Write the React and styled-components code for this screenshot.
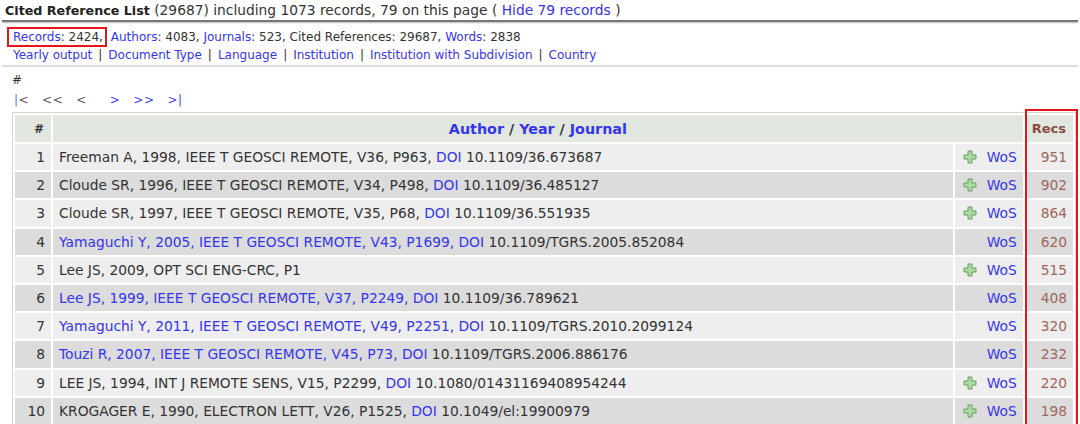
import React from 'react';
import styled, {createGlobalStyle} from 'styled-components';

const GlobalStyle = createGlobalStyle`
  body {
    margin: 0;
    background: #fff;
    font-family: "DejaVu Sans", Verdana, sans-serif;
    font-size: 13.8px;
    color: #333;
  }
`

const Page = styled.div`
  padding: 2px 2px 0 2px;
`
const TitleBar = styled.div`
  padding: 0 3px 1px 3px;
  line-height: 17px;
  border-bottom: 2px solid #777;
  box-shadow: 0 1px 0 #ccc;
`
const Title = styled.b`
  color: #222;
  font-size: 12.7px;
`
const Link = styled.a`
  color: ${p => p.$brown ? '#a0665c' : '#3535ee'};
  text-decoration: none;
  font-weight: ${p => p.$bold ? 'bold' : 'normal'};
`
const InfoBox = styled.div`
  margin-top: 1px;
  padding: 4px 10px 1px 11px;
  border-top: 1px solid #eee;
  border-bottom: 2px solid #ddd;
  line-height: 18px;
  font-size: 12px;
`
const Marked = styled.span`
  display: inline-block;
  border: 2px solid #e8141c;
  padding: 0 2px 0 4px;
  margin: -1px 0 -1px -6px;
  line-height: 16px;
`
const Sep = styled.span`
  margin: 0 6px;
`
const Hash = styled.div`
  margin: 5px 0 0 10px;
  line-height: 16px;
  font-size: 12px;
`
const Pager = styled.div`
  display: flex;
  gap: 13px;
  margin: 4px 0 0 12px;
  line-height: 16px;
  font-size: 12px;
  letter-spacing: 0.5px;
  padding-bottom: 1px;
`
const PageLink = styled.span`
  color: ${p => p.$on ? '#4545ee' : '#6a5a55'};
  margin-left: ${p => p.$wide ? '10px' : '0'};
  & i { font-style: normal; color: #6b6bf0; }
`
const TableWrap = styled.div`
  position: relative;
  margin: 3px 2px 0 10px;
`
const Table = styled.table`
  width: 100%;
  border: 1px solid #d6d6d6;
  border-spacing: 2px;
  background: #fff;
`
const Th = styled.th`
  background: #e1e7df;
  height: 27px;
  padding: 0 7px;
  text-align: ${p => p.$align || 'center'};
  color: ${p => p.$brown ? '#8a4a44' : '#333'};
  font-weight: bold;
  font-size: ${p => p.$size || '14.3px'};
`
const Row = styled.tr`
  background: ${p => p.$even ? '#dcdcdc' : '#eeeeee'};
`
const Td = styled.td`
  height: 26.2px;
  padding: 0 6px;
  text-align: ${p => p.$align || 'left'};
  white-space: nowrap;
  color: ${p => p.$brown ? '#a0665c' : '#333'};
  width: ${p => p.$w || 'auto'};
`
const ToolCell = styled.div`
  display: flex;
  align-items: center;
  justify-content: flex-end;
  gap: 10px;
`
const RedFrame = styled.div`
  position: absolute;
  top: -3px;
  bottom: -40px;
  right: -2px;
  width: 49px;
  border: 2px solid #e8141c;
  pointer-events: none;
`

function Plus() {
    return (
        <svg width="14" height="14" viewBox="0 0 14 14">
            <path d="M5 1h4v4h4v4h-4v4h-4v-4h-4v-4h4z" fill="#a9dba0" stroke="#6c9c64" strokeWidth="1"/>
        </svg>
    )
}

const rows = [
    {n: 1, a: 'Freeman A, 1998, IEEE T GEOSCI REMOTE, V36, P963, ', doi: '10.1109/36.673687', plus: true, recs: 951},
    {n: 2, a: 'Cloude SR, 1996, IEEE T GEOSCI REMOTE, V34, P498, ', doi: '10.1109/36.485127', plus: true, recs: 902},
    {n: 3, a: 'Cloude SR, 1997, IEEE T GEOSCI REMOTE, V35, P68, ', doi: '10.1109/36.551935', plus: true, recs: 864},
    {n: 4, a: 'Yamaguchi Y, 2005, IEEE T GEOSCI REMOTE, V43, P1699, ', doi: '10.1109/TGRS.2005.852084', link: true, recs: 620},
    {n: 5, a: 'Lee JS, 2009, OPT SCI ENG-CRC, P1', plus: true, recs: 515},
    {n: 6, a: 'Lee JS, 1999, IEEE T GEOSCI REMOTE, V37, P2249, ', doi: '10.1109/36.789621', link: true, recs: 408},
    {n: 7, a: 'Yamaguchi Y, 2011, IEEE T GEOSCI REMOTE, V49, P2251, ', doi: '10.1109/TGRS.2010.2099124', link: true, recs: 320},
    {n: 8, a: 'Touzi R, 2007, IEEE T GEOSCI REMOTE, V45, P73, ', doi: '10.1109/TGRS.2006.886176', link: true, recs: 232},
    {n: 9, a: 'LEE JS, 1994, INT J REMOTE SENS, V15, P2299, ', doi: '10.1080/01431169408954244', plus: true, recs: 220},
    {n: 10, a: 'KROGAGER E, 1990, ELECTRON LETT, V26, P1525, ', doi: '10.1049/el:19900979', plus: true, recs: 198},
]

function App() {
    return (
        <Page>
            <GlobalStyle/>
            <TitleBar>
                <Title>Cited Reference List</Title> (29687) including 1073 records, 79 on this page ( <Link>Hide 79 records</Link> )
            </TitleBar>
            <InfoBox>
                <div>
                    <Marked><Link>Records</Link>: 2424,</Marked> <Link>Authors</Link>: 4083, <Link>Journals</Link>: 523, Cited References: 29687, <Link>Words</Link>: 2838
                </div>
                <div>
                    <Link>Yearly output</Link><Sep>|</Sep><Link>Document Type</Link><Sep>|</Sep><Link>Language</Link><Sep>|</Sep><Link>Institution</Link><Sep>|</Sep><Link>Institution with Subdivision</Link><Sep>|</Sep><Link>Country</Link>
                </div>
            </InfoBox>
            <Hash>#</Hash>
            <Pager>
                <PageLink><i>|</i>&lt;</PageLink>
                <PageLink>&lt;&lt;</PageLink>
                <PageLink>&lt;</PageLink>
                <PageLink $on $wide>&gt;</PageLink>
                <PageLink $on>&gt;&gt;</PageLink>
                <PageLink $on>&gt;|</PageLink>
            </Pager>
            <TableWrap>
                <Table>
                    <thead>
                    <tr>
                        <Th $align="right" $size="12px" style={{width: 22}}>#</Th>
                        <Th colSpan={2}><Link $bold>Author</Link> / <Link $bold>Year</Link> / <Link $bold>Journal</Link></Th>
                        <Th $align="right" $brown $size="13px" style={{width: 34}}>Recs</Th>
                    </tr>
                    </thead>
                    <tbody>
                    {rows.map(r => (
                        <Row key={r.n} $even={r.n % 2 === 0}>
                            <Td $align="right">{r.n}</Td>
                            <Td>
                                {r.link ? <Link>{r.a}DOI</Link> : <>{r.a}{r.doi && <Link>DOI</Link>}</>}
                                {r.doi && ' ' + r.doi}
                            </Td>
                            <Td $w="56px">
                                <ToolCell>{r.plus && <Plus/>}<Link>WoS</Link></ToolCell>
                            </Td>
                            <Td $align="right" $brown>{r.recs}</Td>
                        </Row>
                    ))}
                    </tbody>
                </Table>
                <RedFrame/>
            </TableWrap>
        </Page>
    );
}

export default App;
